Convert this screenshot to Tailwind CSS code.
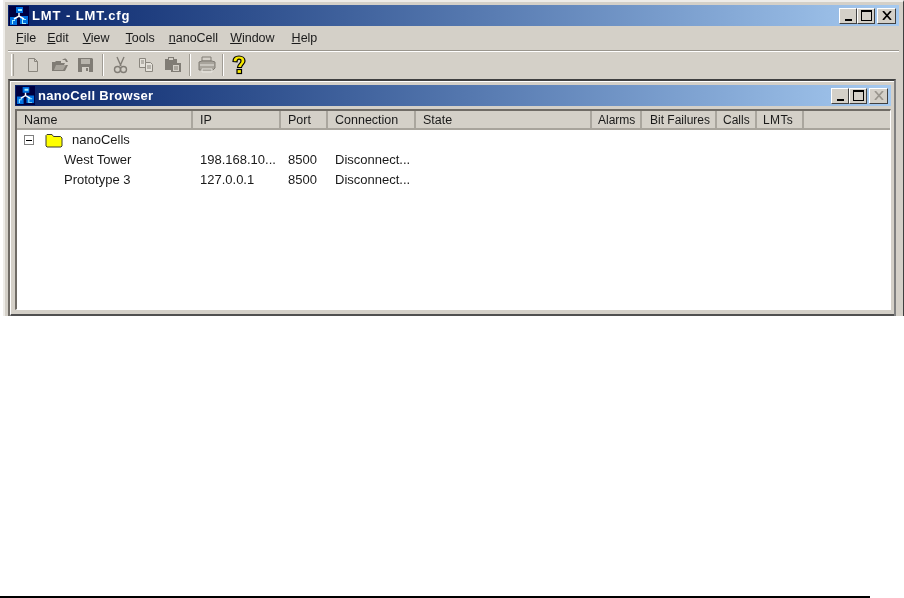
<!DOCTYPE html>
<html><head><meta charset="utf-8"><script src="https://cdn.jsdelivr.net/npm/@tailwindcss/browser@4"></script></head>
<body class="bg-white w-[904px] h-[598px] overflow-hidden relative font-['Liberation_Sans',Arial,sans-serif] text-[12px] text-[#1a1a1a]">
<div class="blur-[0.35px] ml-[3px] w-[901px] h-[316px] overflow-hidden bg-[#d4d0c8] border-l-[2px] border-t-[2px] border-r-[1px] border-[#eeece8] flex flex-col pt-[3px] pl-[3px] pr-[4px] border-r-[#404040]">
  <div class="h-[21px] shrink-0 flex items-center bg-gradient-to-r from-[#0a246a] to-[#a6caf0] pl-[1px] pr-[3px]">
    <svg width="20" height="20" viewBox="0 0 20 20" class="shrink-0"><rect width="20" height="20" fill="#000040"/><path d="M7 1h7v6H7zM1 11h7v8H1zM11 10h8v8h-8z" fill="#0070e0"/><path d="M10 7v4M5 13l5-3 5 3" stroke="#fff" stroke-width="1.500" fill="none"/><path d="M9 3h4v2H9zM3 14h3v1H4v3H3zM13 13h4v1h-3v3h3v1h-4z" fill="#a0f0ff"/></svg>
    <span class="ml-[3px] text-white font-bold text-[13px] tracking-[0.9px]">LMT - LMT.cfg</span>
    <div class="ml-auto flex items-center">
      <button class="w-[18px] h-[16px] bg-[#d4d0c8] border border-t-white border-l-white border-r-[#404040] border-b-[#404040] flex items-end justify-center pb-[2px]"><span class="w-[7px] h-[2px] bg-black"></span></button>
      <button class="w-[18px] h-[16px] bg-[#d4d0c8] border border-t-white border-l-white border-r-[#404040] border-b-[#404040] flex items-center justify-center"><span class="w-[11px] h-[11px] border border-t-2 border-black"></span></button>
      <button class="ml-[2px] w-[19px] h-[16px] bg-[#d4d0c8] border border-t-white border-l-white border-r-[#404040] border-b-[#404040] flex items-center justify-center"><svg width="10" height="9" viewBox="0 0 10 9"><path d="M1 0l8 9M9 0L1 9" stroke="#000" stroke-width="1.700"/></svg></button>
    </div>
  </div>
  <div class="h-[24px] shrink-0 flex items-center pl-[8px] pt-[1px] text-[12.5px]">
    <span><u>F</u>ile</span><span class="ml-[11px]"><u>E</u>dit</span><span class="ml-[14px]"><u>V</u>iew</span><span class="ml-[16px]"><u>T</u>ools</span><span class="ml-[14px]"><u>n</u>anoCell</span><span class="ml-[12px]"><u>W</u>indow</span><span class="ml-[17px]"><u>H</u>elp</span>
  </div>
  <div class="h-[2px] shrink-0 border-t border-t-[#9a968e] border-b border-b-white"></div>
  <div class="h-[27px] shrink-0 flex items-center pl-[3px] pb-[2px]">
    <span class="w-[3px] h-[22px] border-l border-l-white border-r border-r-[#a09c94]"></span>
    <svg class="ml-[11px]" width="16" height="16" viewBox="0 0 16 16"><path d="M3.500 1.500h6l3 3v10h-9z" fill="#d4d0c8" stroke="#8a867e"/><path d="M9.500 1.500v3h3" fill="none" stroke="#8a867e"/></svg>
    <svg class="ml-[10px]" width="18" height="16" viewBox="0 0 18 16"><path d="M1 14V5h3l1-1h5v2h4l-1 2h4l-3 6z" fill="#807c75"/><path d="M3 13l2-5h10l-3 5z" fill="#a8a49c"/><path d="M11 3c2-2 4-2 5 0l1 2h-2l-1-2h-2z" fill="#807c75"/></svg>
    <svg class="ml-[8px]" width="17" height="16" viewBox="0 0 17 16"><path d="M1 1h14l1 1v13H1z" fill="#807c75"/><rect x="4" y="2" width="9" height="5" fill="#b8b4ac"/><rect x="5" y="10" width="7" height="5" fill="#d4d0c8"/><rect x="9" y="11" width="2" height="3" fill="#807c75"/></svg>
    <span class="ml-[8px] w-[2px] h-[22px] border-l border-l-[#a09c94] border-r border-r-white"></span>
    <svg class="ml-[9px]" width="15" height="18" viewBox="0 0 15 18"><path d="M4 1l4 9M11 1L7 10" stroke="#807c75" stroke-width="1.400" fill="none"/><circle cx="4.500" cy="13.500" r="3" fill="none" stroke="#807c75" stroke-width="1.400"/><circle cx="10.500" cy="13.500" r="3" fill="none" stroke="#807c75" stroke-width="1.400"/></svg>
    <svg class="ml-[10px]" width="17" height="16" viewBox="0 0 17 16"><path d="M1.500 1.500h6v9h-6z" fill="#e4e1da" stroke="#8a867e"/><path d="M7.500 5.500h5l2 2v7h-7z" fill="#e4e1da" stroke="#8a867e"/><path d="M3 4h3M3 6h3M9 9h4M9 11h4" stroke="#8a867e"/></svg>
    <svg class="ml-[9px]" width="18" height="17" viewBox="0 0 18 17"><path d="M1 3h3V1h6v2h3v4h4v9H7v-2H1z" fill="#807c75"/><rect x="5" y="2" width="4" height="2" fill="#d4d0c8"/><path d="M8.500 8.500h7v7h-7z" fill="#d4d0c8" stroke="#807c75"/><path d="M10 11h4M10 13h4" stroke="#807c75"/></svg>
    <span class="ml-[7px] w-[2px] h-[22px] border-l border-l-[#a09c94] border-r border-r-white"></span>
    <svg class="ml-[6px]" width="19" height="17" viewBox="0 0 19 17"><path d="M5 1h9v4H5z" fill="#d4d0c8" stroke="#807c75"/><path d="M2 6l3-1h10l3 1v6l-2 2H2z" fill="#a8a49c" stroke="#807c75"/><path d="M3 9h14M5 13h10v3H5z" stroke="#e8e6e0" fill="none"/></svg>
    <span class="ml-[6px] w-[2px] h-[22px] border-l border-l-[#a09c94] border-r border-r-white"></span>
    <svg class="ml-[8px]" width="14" height="20" viewBox="0 0 14 20"><path d="M1 6.500C1 3 3.500 1 7 1s6 2 6 5c0 3-3 3.500-3.500 6.500h-4C5.500 9 9 8.500 9 6c0-1.200-.8-1.800-2-1.800S5 5 5 6.800z" fill="#f6e800" stroke="#000" stroke-width="1.200"/><rect x="5" y="14.500" width="4.500" height="4" fill="#f6e800" stroke="#000" stroke-width="1.200"/></svg>
  </div>
  <div class="flex-1 min-h-0 border-t-[2px] border-l-[2px] border-t-[#404040] border-l-[#706c66] border-r-[2px] border-r-[#808080] mr-[3px] bg-[#d4d0c8]">
    <div class="h-full border-l border-t border-white flex flex-col pl-[4px] pr-[3px] pt-[3px] border-b-[2px] border-b-[#505050]">
      <div class="h-[21px] shrink-0 flex items-center bg-gradient-to-r from-[#0a246a] to-[#a6caf0] pl-[1px] pr-[3px]">
        <svg width="19" height="19" viewBox="0 0 20 20" class="shrink-0"><rect width="20" height="20" fill="#000040"/><path d="M7 1h7v6H7zM1 11h7v8H1zM11 10h8v8h-8z" fill="#0070e0"/><path d="M10 7v4M5 13l5-3 5 3" stroke="#fff" stroke-width="1.500" fill="none"/><path d="M9 3h4v2H9zM3 14h3v1H4v3H3zM13 13h4v1h-3v3h3v1h-4z" fill="#a0f0ff"/></svg>
        <span class="ml-[3px] text-white font-bold text-[13px] tracking-[0.3px]">nanoCell Browser</span>
        <div class="ml-auto flex items-center">
          <button class="w-[18px] h-[16px] bg-[#d4d0c8] border border-t-white border-l-white border-r-[#404040] border-b-[#404040] flex items-end justify-center pb-[2px]"><span class="w-[7px] h-[2px] bg-black"></span></button>
          <button class="w-[18px] h-[16px] bg-[#d4d0c8] border border-t-white border-l-white border-r-[#404040] border-b-[#404040] flex items-center justify-center"><span class="w-[11px] h-[11px] border border-t-2 border-black"></span></button>
          <button class="ml-[2px] w-[19px] h-[16px] bg-[#d4d0c8] border border-t-white border-l-white border-r-[#404040] border-b-[#404040] flex items-center justify-center"><svg width="10" height="9" viewBox="0 0 10 9"><path d="M1 0l8 9M9 0L1 9" stroke="#9a968e" stroke-width="1.700"/></svg></button>
        </div>
      </div>
      <div class="mt-[3px] h-[201px] shrink-0 border-t-[2px] border-l-[2px] border-t-[#706c66] border-l-[#706c66] border-r border-b border-white bg-white">
        <div class="h-[19px] bg-[#d4d0c8] border-b-[2px] border-[#a8a49c] flex">
          <div class="w-[176px] pl-[7px] border-r-[2px] border-r-[#aaa69e] leading-[18px] text-[12.5px]">Name</div>
          <div class="w-[88px] pl-[7px] border-r-[2px] border-r-[#aaa69e] leading-[18px] text-[12.5px]">IP</div>
          <div class="w-[47px] pl-[7px] border-r-[2px] border-r-[#aaa69e] leading-[18px] text-[12.5px]">Port</div>
          <div class="w-[88px] pl-[7px] border-r-[2px] border-r-[#aaa69e] leading-[18px] text-[12.5px]">Connection</div>
          <div class="w-[176px] pl-[7px] border-r-[2px] border-r-[#aaa69e] leading-[18px] text-[12.5px]">State</div>
          <div class="w-[50px] pl-[6px] border-r-[2px] border-r-[#aaa69e] leading-[18px]">Alarms</div>
          <div class="w-[75px] pl-[8px] border-r-[2px] border-r-[#aaa69e] leading-[18px]">Bit Failures</div>
          <div class="w-[40px] pl-[6px] border-r-[2px] border-r-[#aaa69e] leading-[18px]">Calls</div>
          <div class="w-[47px] pl-[6px] border-r-[2px] border-r-[#aaa69e] leading-[18px] tracking-[0.4px]">LMTs</div>
        </div>
        <div class="h-[20px] flex items-center text-[13px]">
          <span class="ml-[7px] w-[10px] h-[10px] border border-[#808080] flex items-center justify-center"><span class="w-[6px] h-[1px] bg-black"></span></span>
          <svg class="ml-[10px]" width="20" height="15" viewBox="0 0 19 15"><path d="M1.500 4V2.500l1-1h5l1.500 2h7l1.500 1.500v8l-1 1h-14l-1-1z" fill="#ffff00" stroke="#3a3a30"/></svg>
          <span class="ml-[8px]">nanoCells</span>
        </div>
        <div class="h-[20px] flex items-center text-[13px]">
          <span class="w-[183px] pl-[47px]">West Tower</span><span class="w-[88px]">198.168.10...</span><span class="w-[47px]">8500</span><span>Disconnect...</span>
        </div>
        <div class="h-[20px] flex items-center text-[13px]">
          <span class="w-[183px] pl-[47px]">Prototype 3</span><span class="w-[88px]">127.0.0.1</span><span class="w-[47px]">8500</span><span>Disconnect...</span>
        </div>
      </div>
    </div>
  </div>
</div>
<div class="absolute left-0 top-[596px] w-[870px] h-[2px] bg-black"></div>
</body></html>
